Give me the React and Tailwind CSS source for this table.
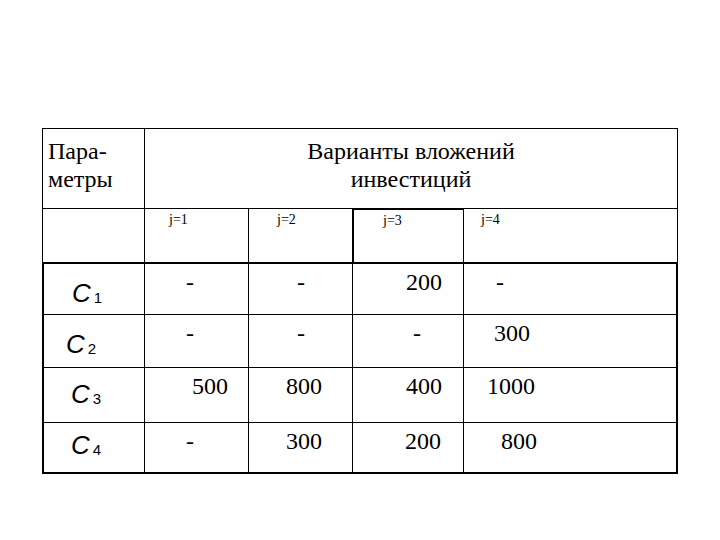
import React from 'react';

const serif = 'font-[family-name:Liberation_Serif,Times_New_Roman,serif]';
const sans = 'font-[family-name:Liberation_Sans,Arial,sans-serif]';

// each data row: height, padding of the C label, then the four value cells
const rows = [
  {
    h: 'h-[51px]',
    c: { n: '1', pad: 'pl-[28px] pt-[16px]' },
    cells: [
      { v: '-', pad: 'pl-[41px]' },
      { v: '-', pad: 'pl-[48px]' },
      { v: '200', pad: 'pl-[53px]' },
      { v: '-', pad: 'pl-[32px]' },
    ],
  },
  {
    h: 'h-[53px]',
    c: { n: '2', pad: 'pl-[22px] pt-[16px]' },
    cells: [
      { v: '-', pad: 'pl-[41px]' },
      { v: '-', pad: 'pl-[48px]' },
      { v: '-', pad: 'pl-[60px]' },
      { v: '300', pad: 'pl-[30px]' },
    ],
  },
  {
    h: 'h-[55px]',
    c: { n: '3', pad: 'pl-[27px] pt-[13px]' },
    cells: [
      { v: '500', pad: 'pl-[47px]' },
      { v: '800', pad: 'pl-[37px]' },
      { v: '400', pad: 'pl-[53px]' },
      { v: '1000', pad: 'pl-[23px]' },
    ],
  },
  {
    h: 'h-[49px]',
    c: { n: '4', pad: 'pl-[27px] pt-[9px]' },
    cells: [
      { v: '-', pad: 'pl-[41px]' },
      { v: '300', pad: 'pl-[37px]' },
      { v: '200', pad: 'pl-[52px]' },
      { v: '800', pad: 'pl-[37px]' },
    ],
  },
];

const widths = ['w-[104px]', 'w-[104px]', 'w-[111px]', 'flex-1'];

export default function App() {
  return (
    <div className="w-[720px] h-[540px] bg-white text-black pt-[128px] pl-[42px]">
      {/* header part, thin lines */}
      <div className="w-[636px] border-t border-l border-r border-black">
        <div className="flex h-[80px] border-b border-black">
          <div className={`w-[102px] border-r border-black pl-[5px] pt-[8px] text-[24px] leading-[28px] ${serif}`}>
            Пара-
            <br />
            метры
          </div>
          <div className={`flex-1 pt-[8px] text-center text-[24px] leading-[28px] ${serif}`}>
            Варианты вложений
            <br />
            инвестиций
          </div>
        </div>
        <div className={`flex h-[53px] text-[14px] leading-[14px] ${serif}`}>
          <div className="w-[102px] border-r border-black" />
          <div className="w-[104px] border-r border-black pl-[24px] pt-[4px]">j=1</div>
          <div className="w-[103px] pl-[28px] pt-[4px]">j=2</div>
          <div className="w-[112px] -mt-px border-t-2 border-l-2 border-r border-black pl-[29px] pt-[4px]">j=3</div>
          <div className="flex-1 pl-[17px] pt-[4px]">j=4</div>
        </div>
      </div>

      {/* data part, thick outer frame */}
      <div className="w-[636px] border-2 border-black">
        {rows.map((r, i) => (
          <div key={i} className={`flex ${r.h} ${i < rows.length - 1 ? 'border-b border-black' : ''}`}>
            <div className={`w-[101px] border-r border-black ${r.c.pad} ${sans}`}>
              <span className="italic text-[26px] leading-[26px]">C</span>
              <span className="ml-[3px] relative top-[1px] text-[15px] leading-[15px]">{r.c.n}</span>
            </div>
            {r.cells.map((c, j) => (
              <div
                key={j}
                className={`${widths[j]} ${j < 3 ? 'border-r border-black' : ''} ${c.pad} pt-[6px] text-[24px] leading-[24px] ${serif}`}
              >
                {c.v}
              </div>
            ))}
          </div>
        ))}
      </div>
    </div>
  );
}
